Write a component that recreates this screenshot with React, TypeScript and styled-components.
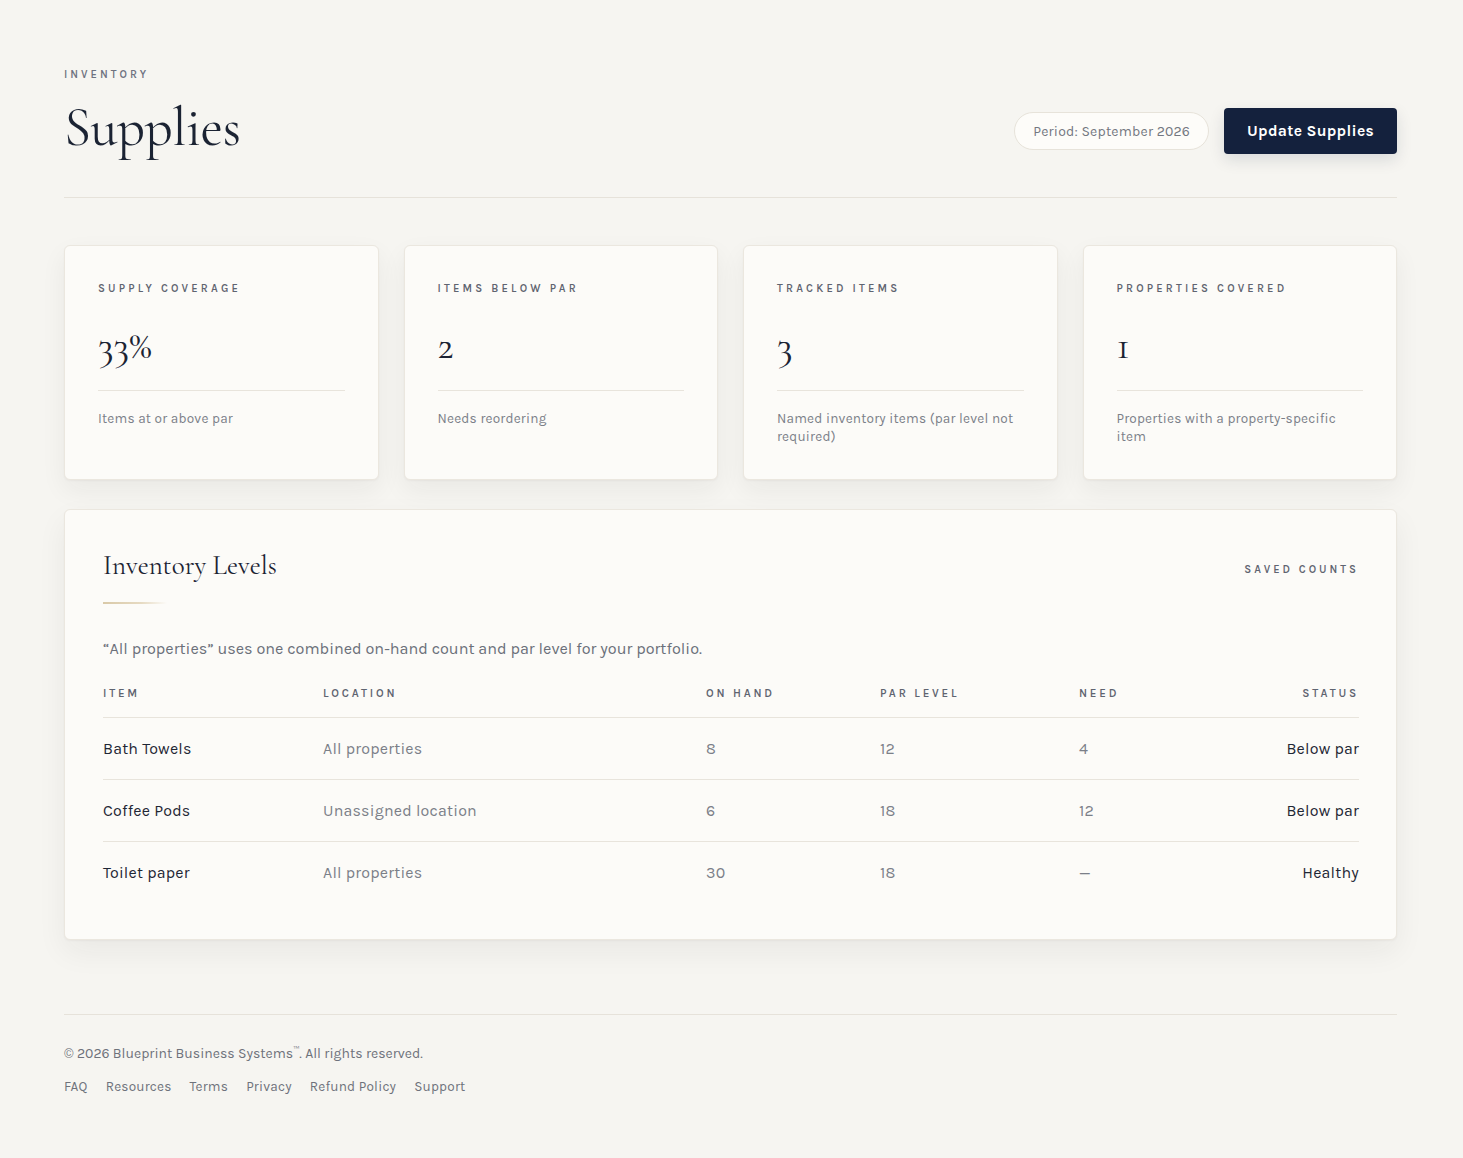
import React from "react";
import styled, { createGlobalStyle } from "styled-components";

const GlobalStyle = createGlobalStyle`
  html, body {
    margin: 0;
    padding: 0;
    background: #f6f5f1;
  }
  body {
    font-family: "Karla", "Open Sans", "Liberation Sans", sans-serif;
    color: #1b2333;
    -webkit-font-smoothing: antialiased;
  }
  * { box-sizing: border-box; }
`;

const serif = `"Cormorant Garamond", "Liberation Serif", "DejaVu Serif", serif`;

const Page = styled.div`
  min-height: 1158px;
  padding: 67px 66px 60px 64px;
  display: flex;
  flex-direction: column;
`;

const Header = styled.header`
  display: flex;
  flex-direction: column;
  padding-bottom: 34px;
  border-bottom: 1px solid #e6e2da;
`;

const Eyebrow = styled.div`
  font-size: 11px;
  line-height: 16px;
  font-weight: 600;
  letter-spacing: 3px;
  color: #6e7280;
  text-transform: uppercase;
`;

const TitleRow = styled.div`
  display: flex;
  align-items: center;
  justify-content: space-between;
  margin-top: 10px;
`;

const Title = styled.h1`
  margin: 0;
  font-family: ${serif};
  font-weight: 400;
  font-size: 55px;
  line-height: 70px;
  color: #1b2333;
  letter-spacing: -0.5px;
`;

const Actions = styled.div`
  display: flex;
  align-items: center;
  gap: 15px;
  margin-top: 6px;
`;

const PeriodPill = styled.div`
  height: 38px;
  padding: 0 18px;
  display: flex;
  align-items: center;
  border-radius: 19px;
  border: 1px solid #e7e3da;
  background: #fdfcf9;
  font-size: 14px;
  color: #737780;
  letter-spacing: 0.2px;
`;

const PrimaryButton = styled.button`
  height: 46px;
  padding: 0 23px;
  border: none;
  border-radius: 4px;
  background: #14213d;
  color: #ffffff;
  font-family: inherit;
  font-size: 15.6px;
  font-weight: 700;
  letter-spacing: 0.3px;
  box-shadow: 0 6px 16px rgba(20, 33, 61, 0.12);
  cursor: pointer;
`;

const StatGrid = styled.section`
  margin-top: 47px;
  display: grid;
  grid-template-columns: repeat(4, 1fr);
  gap: 25px;
`;

const Card = styled.div`
  background: #fcfbf8;
  border: 1px solid #ebe7df;
  border-radius: 6px;
  box-shadow: 0 10px 26px rgba(40, 36, 28, 0.06), 0 1px 2px rgba(40, 36, 28, 0.04);
  padding: 35px 33px 33px 33px;
  display: flex;
  flex-direction: column;
`;

const CardLabel = styled.div`
  font-size: 11px;
  line-height: 16px;
  font-weight: 600;
  letter-spacing: 3.2px;
  color: #5f6470;
  text-transform: uppercase;
`;

const CardValue = styled.div`
  margin-top: 24px;
  font-family: ${serif};
  font-size: 40px;
  line-height: 48px;
  color: #1b2333;
`;

const CardDivider = styled.hr`
  margin: 21px 0 0 0;
  border: none;
  border-top: 1px solid #e8e4dc;
`;

const CardNote = styled.p`
  margin: 19px 0 0 0;
  font-size: 13.6px;
  line-height: 18px;
  color: #7b7f88;
  letter-spacing: 0.2px;
`;

const Panel = styled.section`
  margin-top: 29px;
  background: #fcfbf8;
  border: 1px solid #ebe7df;
  border-radius: 6px;
  box-shadow: 0 12px 30px rgba(40, 36, 28, 0.06), 0 1px 2px rgba(40, 36, 28, 0.04);
  padding: 39px 37px 35px 38px;
`;

const PanelHead = styled.div`
  display: flex;
  align-items: center;
  justify-content: space-between;
`;

const PanelTitle = styled.h2`
  margin: 0;
  font-family: ${serif};
  font-weight: 400;
  font-size: 27px;
  line-height: 34px;
  color: #1b2333;
`;

const PanelTag = styled.div`
  font-size: 11px;
  font-weight: 600;
  letter-spacing: 3px;
  color: #5f6470;
  text-transform: uppercase;
  margin-top: 6px;
`;

const GoldRule = styled.div`
  margin-top: 19px;
  width: 64px;
  height: 2px;
  background: linear-gradient(90deg, #d9c9a8 0%, #e6dac2 60%, rgba(236, 226, 206, 0) 100%);
`;

const PanelNote = styled.p`
  margin: 34px 0 0 0;
  font-size: 16.2px;
  line-height: 22px;
  color: #6b707a;
`;

const Table = styled.div`
  margin-top: 26px;
  display: flex;
  flex-direction: column;
`;

const Row = styled.div<{ $head?: boolean; $last?: boolean }>`
  display: grid;
  grid-template-columns: 220px 383px 174px 199px 1fr 1fr;
  align-items: center;
  padding: ${(p) => (p.$head ? "0 0 15px 0" : "20px 0")};
  min-height: ${(p) => (p.$head ? "auto" : "61.5px")};
  border-bottom: ${(p) => (p.$last ? "none" : "1px solid #e8e4dc")};
`;

const HeadCell = styled.div<{ $right?: boolean }>`
  font-size: 11.4px;
  line-height: 16px;
  font-weight: 600;
  letter-spacing: 2.8px;
  color: #5f6470;
  text-transform: uppercase;
  text-align: ${(p) => (p.$right ? "right" : "left")};
`;

const Cell = styled.div<{ $tone?: "strong" | "muted"; $right?: boolean }>`
  font-size: 16px;
  line-height: 21px;
  letter-spacing: 0.2px;
  color: ${(p) => (p.$tone === "strong" ? "#1f2735" : "#7b7f88")};
  text-align: ${(p) => (p.$right ? "right" : "left")};
`;

const Footer = styled.footer`
  margin-top: 74px;
  border-top: 1px solid #e6e2da;
  padding-top: 25px;
  display: flex;
  flex-direction: column;
  gap: 13px;
`;

const Copyright = styled.div`
  font-size: 14px;
  line-height: 20px;
  color: #6e727b;
  sup {
    font-size: 9px;
    vertical-align: 5px;
  }
`;

const FooterLinks = styled.nav`
  display: flex;
  gap: 18px;
`;

const FooterLink = styled.a`
  font-size: 13.6px;
  line-height: 20px;
  color: #6e727b;
  text-decoration: none;
  letter-spacing: 0.2px;
`;

const stats = [
  { label: "Supply Coverage", value: "33%", note: "Items at or above par" },
  { label: "Items Below Par", value: "2", note: "Needs reordering" },
  { label: "Tracked Items", value: "3", note: "Named inventory items (par level not required)" },
  { label: "Properties Covered", value: "1", note: "Properties with a property-specific item" },
];

const rows = [
  { item: "Bath Towels", location: "All properties", onHand: "8", par: "12", need: "4", status: "Below par" },
  { item: "Coffee Pods", location: "Unassigned location", onHand: "6", par: "18", need: "12", status: "Below par" },
  { item: "Toilet paper", location: "All properties", onHand: "30", par: "18", need: "—", status: "Healthy" },
];

const links = ["FAQ", "Resources", "Terms", "Privacy", "Refund Policy", "Support"];

export default function App() {
  return (
    <>
      <GlobalStyle />
      <Page>
        <Header>
          <Eyebrow>Inventory</Eyebrow>
          <TitleRow>
            <Title>Supplies</Title>
            <Actions>
              <PeriodPill>Period: September 2026</PeriodPill>
              <PrimaryButton>Update Supplies</PrimaryButton>
            </Actions>
          </TitleRow>
        </Header>

        <StatGrid>
          {stats.map((s) => (
            <Card key={s.label}>
              <CardLabel>{s.label}</CardLabel>
              <CardValue>{s.value}</CardValue>
              <CardDivider />
              <CardNote>{s.note}</CardNote>
            </Card>
          ))}
        </StatGrid>

        <Panel>
          <PanelHead>
            <PanelTitle>Inventory Levels</PanelTitle>
            <PanelTag>Saved Counts</PanelTag>
          </PanelHead>
          <GoldRule />
          <PanelNote>“All properties” uses one combined on-hand count and par level for your portfolio.</PanelNote>
          <Table>
            <Row $head>
              <HeadCell>Item</HeadCell>
              <HeadCell>Location</HeadCell>
              <HeadCell>On Hand</HeadCell>
              <HeadCell>Par Level</HeadCell>
              <HeadCell>Need</HeadCell>
              <HeadCell $right>Status</HeadCell>
            </Row>
            {rows.map((r, i) => (
              <Row key={r.item} $last={i === rows.length - 1}>
                <Cell $tone="strong">{r.item}</Cell>
                <Cell>{r.location}</Cell>
                <Cell>{r.onHand}</Cell>
                <Cell>{r.par}</Cell>
                <Cell>{r.need}</Cell>
                <Cell $tone="strong" $right>{r.status}</Cell>
              </Row>
            ))}
          </Table>
        </Panel>

        <Footer>
          <Copyright>
            © 2026 Blueprint Business Systems<sup>™</sup>. All rights reserved.
          </Copyright>
          <FooterLinks>
            {links.map((l) => (
              <FooterLink key={l} href="#">
                {l}
              </FooterLink>
            ))}
          </FooterLinks>
        </Footer>
      </Page>
    </>
  );
}
